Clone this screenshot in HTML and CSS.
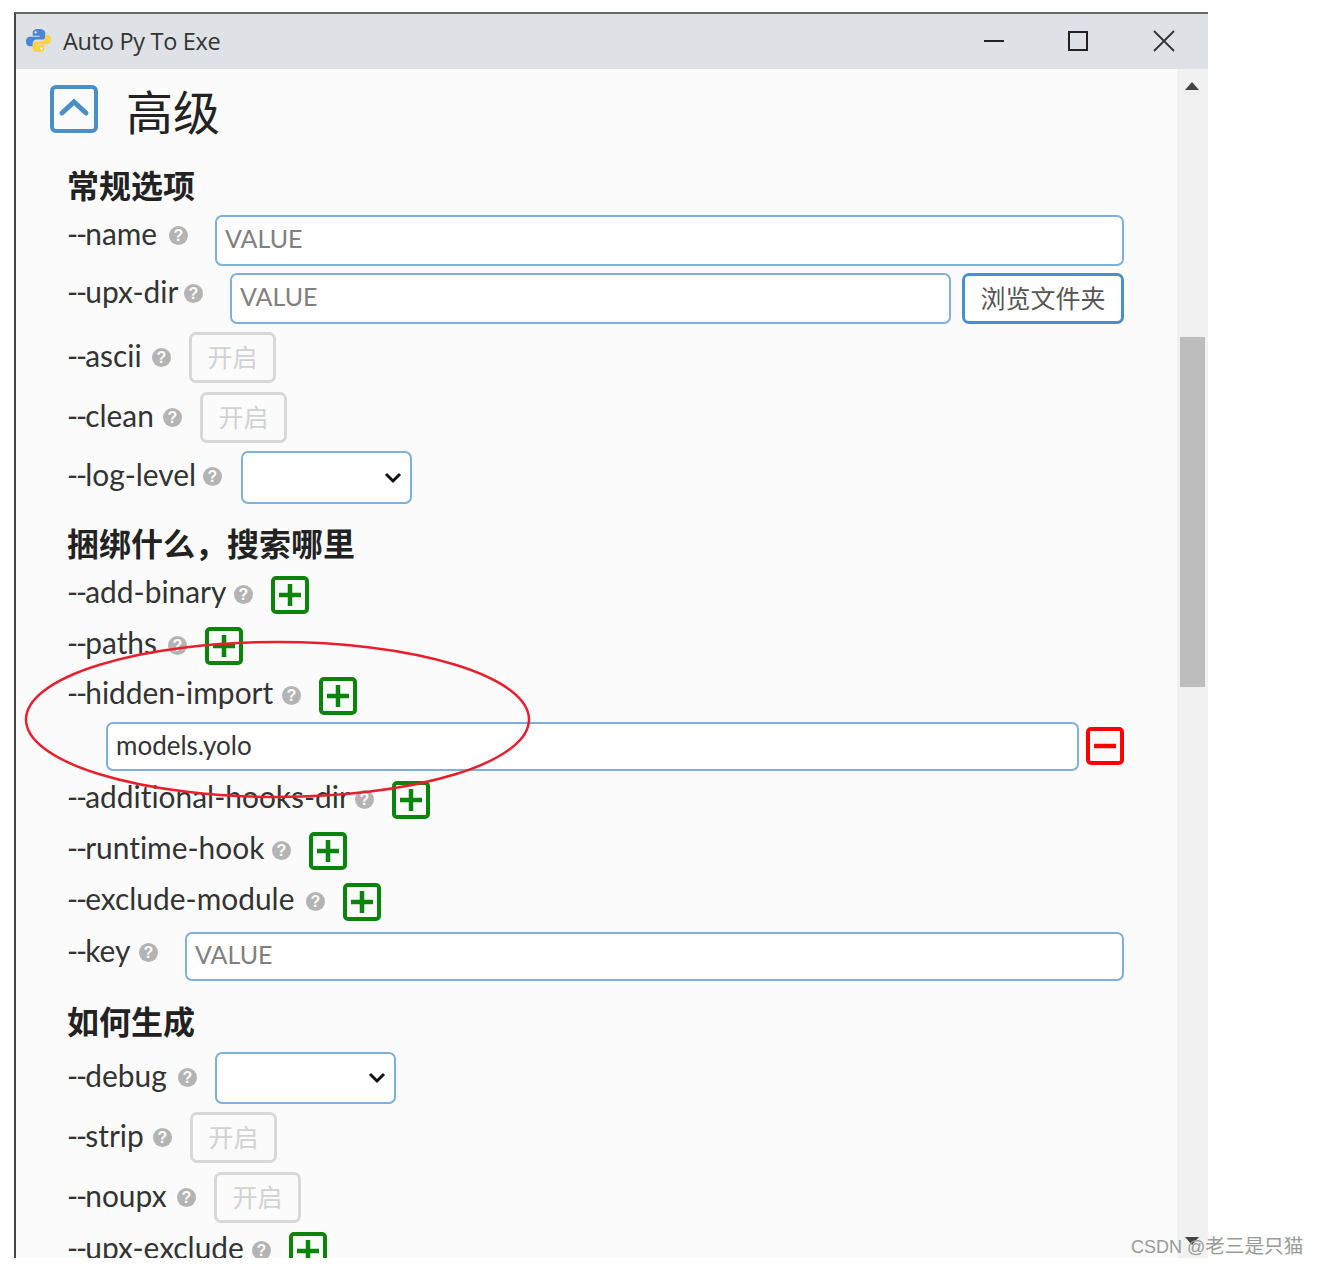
FILE: index.html
```html
<!DOCTYPE html>
<html lang="zh-CN">
<head>
<meta charset="utf-8">
<title>Auto Py To Exe</title>
<link rel="stylesheet" href="styles.css">
</head>
<body>
<div class="window">
  <header class="titlebar">
    <svg class="logo" viewBox="0 0 26 26" width="25" height="25">
      <path fill="#4a86d8" d="M13 1c-5 0-6 2-6 4v3h7v1H4c-2.500 0-4 2-4 5s1.500 5 4 5h3v-3c0-2.500 2-4 4-4h6c2 0 3-1.500 3-3V5c0-2-2-4-7-4z"/>
      <path fill="#ffd04a" d="M13 25c5 0 6-2 6-4v-3h-7v-1h10c2.500 0 4-2 4-5s-1.500-5-4-5h-2v3c0 2.500-2 4-4 4H10c-2 0-3 1.500-3 3v4c0 2 1 4 6 4z"/>
      <circle cx="10" cy="4.500" r="1.200" fill="#fff"/>
      <circle cx="16" cy="21.500" r="1.200" fill="#fff"/>
    </svg>
    <span class="title">Auto Py To Exe</span>
    <div class="controls">
      <svg class="ctl" viewBox="0 0 24 24" width="24" height="24"><path d="M2 12h20" stroke="#222" stroke-width="2" fill="none"/></svg>
      <svg class="ctl ctl-max" viewBox="0 0 24 24" width="24" height="24"><rect x="3" y="3" width="18" height="18" stroke="#222" stroke-width="2" fill="none"/></svg>
      <svg class="ctl ctl-close" viewBox="0 0 24 24" width="24" height="24"><path d="M2 2l20 20M22 2L2 22" stroke="#333" stroke-width="1.800" fill="none"/></svg>
    </div>
  </header>
  <div class="body">
    <main class="content">
      <div class="section-head">
        <span class="collapse">
          <svg viewBox="0 0 48 48" width="48" height="48"><rect x="2" y="2" width="44" height="44" rx="4" fill="none" stroke="#4a90c8" stroke-width="4"/><path d="M12 28l12-11 12 11" fill="none" stroke="#4a90c8" stroke-width="5" stroke-linecap="round"/></svg>
        </span>
        <h1>高级</h1>
      </div>
      <h2 class="h-first">常规选项</h2>

      <div class="row row-input row-name"><label class="l-name"><span class="dd">--</span>name</label><i class="help">?</i><input class="field gap-input" placeholder="VALUE"></div>
      <div class="row row-input"><label class="l-upx"><span class="dd">--</span>upx-dir</label><i class="help">?</i><input class="field gap-input" placeholder="VALUE"><button class="browse">浏览文件夹</button></div>
      <div class="row row-toggle"><label class="l-ascii"><span class="dd">--</span>ascii</label><i class="help">?</i><button class="toggle">开启</button></div>
      <div class="row row-toggle row-close"><label class="l-clean"><span class="dd">--</span>clean</label><i class="help">?</i><button class="toggle">开启</button></div>
      <div class="row row-toggle"><label class="l-log"><span class="dd">--</span>log-level</label><i class="help">?</i><div class="select"><svg viewBox="0 0 18 12" width="18" height="12"><path d="M2 2l7 7 7-7" fill="none" stroke="#111" stroke-width="3"/></svg></div></div>

      <h2 class="h-second">捆绑什么，搜索哪里</h2>

      <div class="row row-plus"><label class="l-add"><span class="dd">--</span>add-binary</label><i class="help">?</i><button class="icon-btn plus"><svg viewBox="0 0 24 24" width="24" height="24"><path d="M12 1v22M1 12h22" stroke="#0a840a" stroke-width="4.500"/></svg></button></div>
      <div class="row row-plus tight"><label class="l-paths"><span class="dd">--</span>paths</label><i class="help">?</i><button class="icon-btn plus"><svg viewBox="0 0 24 24" width="24" height="24"><path d="M12 1v22M1 12h22" stroke="#0a840a" stroke-width="4.500"/></svg></button></div>
      <div class="row row-plus tighter"><label class="l-hidden"><span class="dd">--</span>hidden-import</label><i class="help">?</i><button class="icon-btn plus"><svg viewBox="0 0 24 24" width="24" height="24"><path d="M12 1v22M1 12h22" stroke="#0a840a" stroke-width="4.500"/></svg></button></div>
      <div class="row entry"><input class="field entry-field" value="models.yolo"><button class="icon-btn minus"><svg viewBox="0 0 24 24" width="24" height="24"><path d="M1 12h22" stroke="#f00" stroke-width="4.500"/></svg></button></div>
      <div class="row row-plus"><label class="l-hooks"><span class="dd">--</span>additional-hooks-dir</label><i class="help">?</i><button class="icon-btn plus"><svg viewBox="0 0 24 24" width="24" height="24"><path d="M12 1v22M1 12h22" stroke="#0a840a" stroke-width="4.500"/></svg></button></div>
      <div class="row row-plus"><label class="l-runtime"><span class="dd">--</span>runtime-hook</label><i class="help">?</i><button class="icon-btn plus"><svg viewBox="0 0 24 24" width="24" height="24"><path d="M12 1v22M1 12h22" stroke="#0a840a" stroke-width="4.500"/></svg></button></div>
      <div class="row row-plus snug"><label class="l-exclude"><span class="dd">--</span>exclude-module</label><i class="help">?</i><button class="icon-btn plus"><svg viewBox="0 0 24 24" width="24" height="24"><path d="M12 1v22M1 12h22" stroke="#0a840a" stroke-width="4.500"/></svg></button></div>
      <div class="row row-input"><label class="l-key"><span class="dd">--</span>key</label><i class="help">?</i><input class="field gap-input key-field" placeholder="VALUE"></div>

      <h2 class="h-third">如何生成</h2>

      <div class="row row-toggle row-close"><label class="l-debug"><span class="dd">--</span>debug</label><i class="help">?</i><div class="select select-small"><svg viewBox="0 0 18 12" width="18" height="12"><path d="M2 2l7 7 7-7" fill="none" stroke="#111" stroke-width="3"/></svg></div></div>
      <div class="row row-toggle"><label class="l-strip"><span class="dd">--</span>strip</label><i class="help">?</i><button class="toggle">开启</button></div>
      <div class="row row-toggle"><label class="l-noupx"><span class="dd">--</span>noupx</label><i class="help">?</i><button class="toggle">开启</button></div>
      <div class="row row-plus"><label class="l-upxex"><span class="dd">--</span>upx-exclude</label><i class="help">?</i><button class="icon-btn plus"><svg viewBox="0 0 24 24" width="24" height="24"><path d="M12 1v22M1 12h22" stroke="#0a840a" stroke-width="4.500"/></svg></button></div>
    </main>
    <aside class="scrollbar">
      <span class="arrow-up"></span>
      <span class="thumb"></span>
      <span class="arrow-down"></span>
    </aside>
  </div>
</div>
<svg class="annotation" viewBox="0 0 520 170" width="520" height="170"><ellipse cx="259.500" cy="79.500" rx="251.500" ry="77.500" fill="none" stroke="#e8202e" stroke-width="2.500"/></svg>
<div class="watermark">CSDN @<span class="wm-cjk">老三是只猫</span></div>
</body>
</html>
```
FILE: styles.css
```css
* { box-sizing: border-box; }
html, body { margin: 0; padding: 0; background: #fff; }
body {
  height: 1266px;
  overflow: hidden;
  position: relative;
  padding: 12px 0 0 14px;
  font-family: "Lato", "Noto Sans CJK SC", sans-serif;
  color: #333;
}
.window {
  width: 1194px;
  height: 1246px;
  border-top: 2px solid #666;
  border-left: 2px solid #444;
  display: flex;
  flex-direction: column;
  overflow: hidden;
  background: #fbfbfb;
}
.titlebar {
  height: 55px;
  flex: none;
  background: #dee1e6;
  display: flex;
  align-items: center;
  padding-left: 10px;
  padding-bottom: 2px;
}
.title {
  font-family: "Open Sans", sans-serif;
  font-size: 23.500px;
  margin-left: 12px;
  color: #333;
  letter-spacing: -0.3px;
}
.controls { margin-left: auto; display: flex; align-items: center; padding-right: 32px; }
.ctl-max { margin-left: 60px; }
.ctl-close { margin-left: 62px; }
.body { flex: 1; display: flex; min-height: 0; }
.content { flex: 1; padding: 16px 53px 0 51px; overflow: hidden; min-width: 0; }
.section-head { display: flex; align-items: center; margin-left: -17px; height: 48px; }
.collapse { display: flex; }
h1 {
  margin: 2px 0 0 28px;
  font-family: "Noto Sans CJK SC", sans-serif;
  font-size: 47px;
  font-weight: 400;
  line-height: 60px;
  color: #222;
}
h2 {
  margin: 0;
  font-family: "Noto Sans CJK SC", sans-serif;
  font-size: 32px;
  font-weight: 700;
  line-height: 40px;
  color: #222;
}
.h-first { margin-top: 31px; margin-bottom: 11px; }
.h-second { margin-top: 18px; margin-bottom: 14px; }
.h-third { margin-top: 19px; margin-bottom: 12px; }
.row { display: flex; align-items: flex-start; margin-bottom: 8px; }
label {
  flex: none;
  font-size: 29.900px;
  line-height: 38px;
  white-space: nowrap;
  font-variant-ligatures: none;
}
.dd { letter-spacing: -2px; }
.l-name { width: 93px; }
.l-upx { width: 108px; }
.l-ascii { width: 76px; }
.l-clean { width: 87px; }
.l-log { width: 127px; }
.l-add { width: 158px; }
.l-paths { width: 92px; }
.l-hidden { width: 206px; }
.l-hooks { width: 279px; }
.l-runtime { width: 196px; }
.l-exclude { width: 230px; }
.l-key { width: 63px; }
.l-debug { width: 102px; }
.l-strip { width: 77px; }
.l-noupx { width: 101px; }
.l-upxex { width: 176px; }
.help {
  flex: none;
  width: 19px;
  height: 19px;
  margin-left: 9px;
  border-radius: 50%;
  background: #b4b4b4;
  color: #fbfbfb;
  font: 700 16px/19px "Liberation Sans", sans-serif;
  text-align: center;
}
.row-name { margin-bottom: 7px; }
.row-input label { margin-top: -1px; }
.row-input .help { margin-top: 11px; }
.row-toggle label { margin-top: 4px; }
.row-toggle .help { margin-top: 16px; }
.row-toggle { margin-bottom: 9px; }
.row-toggle.row-close { margin-bottom: 8px; }
.row-plus { margin-bottom: 13px; }
.row-plus.tight { margin-bottom: 12px; }
.row-plus.tighter { margin-bottom: 7px; }
.row-plus.snug { margin-bottom: 11px; }
.row-plus label { margin-top: -4px; }
.row-plus .help { margin-top: 9px; }
.field {
  flex: 1;
  min-width: 0;
  height: 51px;
  border: 2px solid #7fb0dc;
  border-radius: 7px;
  background: #fff;
  padding: 0 8px 6px;
  font: 25px "Lato", sans-serif;
  color: #333;
  outline: none;
}
.field::placeholder { color: #808080; opacity: 1; }
.gap-input { margin-left: 27px; }
.key-field { height: 49px; }
.browse {
  flex: none;
  width: 162px;
  height: 51px;
  margin-left: 11px;
  border: 3px solid #4a8fc9;
  border-radius: 7px;
  background: #fff;
  font: 25px "Noto Sans CJK SC", sans-serif;
  color: #555;
  padding: 0 0 3px;
}
.toggle {
  flex: none;
  width: 87px;
  height: 51px;
  margin-left: 18px;
  border: 3px solid #d8d8d8;
  border-radius: 7px;
  background: #fbfbfb;
  font: 25px "Noto Sans CJK SC", sans-serif;
  color: #d2d2d2;
  padding: 0 0 3px;
}
.select {
  width: 171px;
  height: 53px;
  margin-left: 19px;
  border: 2px solid #7fb0dc;
  border-radius: 7px;
  background: #fff;
  display: flex;
  align-items: center;
  justify-content: flex-end;
  padding-right: 8px;
}
.select-small { width: 181px; height: 52px; margin-left: 18px; }
.icon-btn {
  flex: none;
  width: 38px;
  height: 38px;
  padding: 0;
  border-radius: 5px;
  background: transparent;
  display: flex;
  align-items: center;
  justify-content: center;
}
.plus { border: 4px solid #0a840a; margin-left: 18px; }
.minus { border: 4px solid #f00; margin-left: 7px; margin-top: 5px; }
.entry { padding-left: 39px; margin-bottom: 10px; }
.entry-field { height: 49px; border-width: 2px; color: #333; font-size: 26px; padding-bottom: 4px; }
.scrollbar {
  flex: none;
  width: 31px;
  background: #f1f1f1;
  position: relative;
  display: flex;
  flex-direction: column;
  align-items: center;
  padding-right: 1px;
}
.arrow-up {
  margin-top: 13px;
  border-left: 7px solid transparent;
  border-right: 7px solid transparent;
  border-bottom: 8px solid #444;
}
.thumb { margin-top: 247px; width: 25px; height: 350px; background: #bdbdbd; }
.arrow-down {
  margin-top: auto;
  margin-bottom: 13px;
  border-left: 7px solid transparent;
  border-right: 7px solid transparent;
  border-top: 8px solid #444;
}
.annotation { position: absolute; left: 18px; top: 640px; }
.watermark {
  position: absolute;
  left: 1131px;
  top: 1232px;
  font: 18px/28px "Liberation Sans", "Noto Sans CJK SC", sans-serif;
  color: #9a9a9a;
  white-space: nowrap;
}
.wm-cjk { font-size: 19.600px; }
```
